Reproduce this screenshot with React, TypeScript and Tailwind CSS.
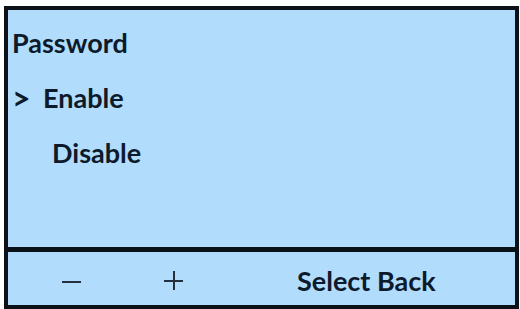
export default function App() {
  return (
    <div className="w-[520px] h-[309px] bg-white pt-[6px] pl-[4px] pr-[1px] overflow-hidden" style={{ fontFamily: "Lato, 'Open Sans', sans-serif" }}>
      <div className="w-[515px] h-[303px] border-4 border-b-0 border-[#0c1117] bg-[#b1dcfc] flex flex-col text-[#0d1a2b]">
        <div className="h-[237px] pt-[5px] pl-[4px] flex flex-col text-[27px] font-bold">
          <div className="h-[55px] leading-[55px]">Password</div>
          <div className="h-[55px] leading-[55px] flex">
            <span className="w-[31px] text-[32px]">&gt;</span>
            <span>Enable</span>
          </div>
          <div className="h-[55px] leading-[55px] pl-[40px]">Disable</div>
        </div>
        <div className="h-[5px] bg-[#0c1117]" />
        <div className="h-[57px] pt-[3px] border-b-4 border-[#0c1117] flex items-center text-[27px]">
          <span className="ml-[54px] w-[19px] flex items-center justify-center">
            <span className="block w-[19px] h-[2px] mt-[4px] bg-[#24303e]" />
          </span>
          <span className="ml-[83px] w-[19px] h-[19px] relative">
            <span className="absolute left-0 right-0 top-[9px] h-[2px] bg-[#24303e]" />
            <span className="absolute top-0 bottom-0 left-[9px] w-[2px] bg-[#24303e]" />
          </span>
          <span className="ml-[114px] font-bold leading-none">Select Back</span>
        </div>
      </div>
    </div>
  );
}
